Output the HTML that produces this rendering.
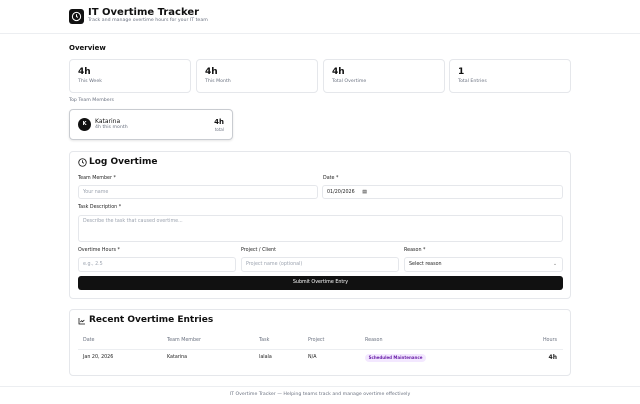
<!DOCTYPE html>
<html><head><style>
*{box-sizing:border-box;margin:0;padding:0}
body{width:640px;height:404px;background:#fff;font-family:"DejaVu Sans","Liberation Sans",sans-serif;color:#111;position:relative;overflow:hidden}
.a{position:absolute}
.card{position:absolute;border:1px solid #e5e7eb;border-radius:4px;background:#fff}
.s{font-size:4.7px;color:#6b7280}
.lbl{position:absolute;font-size:4.8px;color:#222}
.in{position:absolute;border:1px solid #e5e7eb;border-radius:3px;font-size:4.8px;color:#9ca3af;padding-left:4px;display:flex;align-items:center}
.th{position:absolute;top:338px;font-size:4.8px;color:#6b7280}
.td{position:absolute;top:355px;font-size:4.8px;color:#222}
</style></head><body>
<div class="a" style="left:69px;top:9px;width:15px;height:15px;background:#111;border-radius:3px"></div>
<svg class="a" style="left:71px;top:11px" width="11" height="11" viewBox="0 0 24 24" fill="none" stroke="#fff" stroke-width="2.2"><circle cx="12" cy="12" r="9"/><path d="M12 7v5l3 2"/></svg>
<div class="a" style="left:88px;top:7px;font-size:10px;font-weight:bold">IT Overtime Tracker</div>
<div class="a s" style="left:88px;top:18px">Track and manage overtime hours for your IT team</div>
<div class="a" style="left:0;top:33px;width:640px;height:1px;background:#eceef1"></div>
<div class="a" style="left:69px;top:44px;font-size:7px;font-weight:bold">Overview</div>
<div class="card" style="left:69px;top:59px;width:122px;height:34px"><div class="a" style="left:8px;top:7px;font-size:9px;font-weight:bold">4h</div><div class="a s" style="left:8px;top:19px">This Week</div></div>
<div class="card" style="left:196px;top:59px;width:122px;height:34px"><div class="a" style="left:8px;top:7px;font-size:9px;font-weight:bold">4h</div><div class="a s" style="left:8px;top:19px">This Month</div></div>
<div class="card" style="left:323px;top:59px;width:122px;height:34px"><div class="a" style="left:8px;top:7px;font-size:9px;font-weight:bold">4h</div><div class="a s" style="left:8px;top:19px">Total Overtime</div></div>
<div class="card" style="left:449px;top:59px;width:122px;height:34px"><div class="a" style="left:8px;top:7px;font-size:9px;font-weight:bold">1</div><div class="a s" style="left:8px;top:19px">Total Entries</div></div>
<div class="a s" style="left:69px;top:98px">Top Team Members</div>
<div class="card" style="left:69px;top:109px;width:164px;height:31px;border-color:#c9ccd1;box-shadow:0 1px 2px rgba(0,0,0,.1)">
<div class="a" style="left:8px;top:8px;width:13px;height:13px;border-radius:50%;background:#111;color:#fff;font-size:5px;font-weight:bold;text-align:center;line-height:13px">K</div>
<div class="a" style="left:25px;top:8px;font-size:6px">Katarina</div>
<div class="a s" style="left:25px;top:15px">4h this month</div>
<div class="a" style="right:8px;top:8px;font-size:7px;font-weight:bold">4h</div>
<div class="a s" style="right:8px;top:17px;font-size:4px">total</div></div>
<div class="card" style="left:69px;top:151px;width:502px;height:148px"></div>
<svg class="a" style="left:78px;top:158px" width="9" height="9" viewBox="0 0 24 24" fill="none" stroke="#111" stroke-width="2.2"><circle cx="12" cy="12" r="10"/><path d="M12 6v6l4 2"/></svg>
<div class="a" style="left:89px;top:157px;font-size:9px;font-weight:bold">Log Overtime</div>
<div class="lbl" style="left:78px;top:176px">Team Member *</div>
<div class="in" style="left:78px;top:185px;width:240px;height:14px">Your name</div>
<div class="lbl" style="left:323px;top:176px">Date *</div>
<div class="in" style="left:322px;top:185px;width:241px;height:14px;color:#222">01/20/2026 &nbsp;&nbsp;&nbsp;&nbsp;▤</div>
<div class="lbl" style="left:78px;top:205px">Task Description *</div>
<div class="in" style="left:78px;top:215px;width:485px;height:27px;align-items:flex-start;padding-top:3px">Describe the task that caused overtime...</div>
<div class="lbl" style="left:78px;top:248px">Overtime Hours *</div>
<div class="in" style="left:78px;top:257px;width:158px;height:15px">e.g., 2.5</div>
<div class="lbl" style="left:241px;top:248px">Project / Client</div>
<div class="in" style="left:241px;top:257px;width:158px;height:15px">Project name (optional)</div>
<div class="lbl" style="left:404px;top:248px">Reason *</div>
<div class="in" style="left:404px;top:257px;width:159px;height:15px;color:#222">Select reason<span style="position:absolute;right:5px;color:#888">⌄</span></div>
<div class="a" style="left:78px;top:276px;width:485px;height:14px;background:#111;border-radius:3px;color:#fff;font-size:4.8px;text-align:center;line-height:14px">Submit Overtime Entry</div>
<div class="card" style="left:69px;top:309px;width:502px;height:67px"></div>
<svg class="a" style="left:78px;top:317px" width="8" height="8" viewBox="0 0 24 24" fill="none" stroke="#111" stroke-width="2.4"><path d="M3 3v18h18M7 15l4-4 3 3 5-5"/></svg>
<div class="a" style="left:89px;top:315px;font-size:9px;font-weight:bold">Recent Overtime Entries</div>
<div class="th" style="left:83px">Date</div><div class="th" style="left:167px">Team Member</div><div class="th" style="left:259px">Task</div><div class="th" style="left:308px">Project</div><div class="th" style="left:365px">Reason</div><div class="th" style="right:83px">Hours</div>
<div class="a" style="left:78px;top:349px;width:485px;height:1px;background:#eceef1"></div>
<div class="td" style="left:83px">Jan 20, 2026</div><div class="td" style="left:167px">Katarina</div><div class="td" style="left:259px">lalala</div><div class="td" style="left:308px">N/A</div>
<div class="a" style="left:365px;top:354px;width:61px;height:8px;border-radius:4px;background:#f3e8ff;color:#6b21a8;font-size:4px;font-weight:bold;text-align:center;line-height:8px">Scheduled Maintenance</div>
<div class="td" style="right:83px;font-weight:bold;font-size:6px;top:354px">4h</div>
<div class="a" style="left:0;top:386px;width:640px;height:1px;background:#eceef1"></div>
<div class="a s" style="left:0;width:640px;top:392px;text-align:center">IT Overtime Tracker — Helping teams track and manage overtime effectively</div>
</body></html>
